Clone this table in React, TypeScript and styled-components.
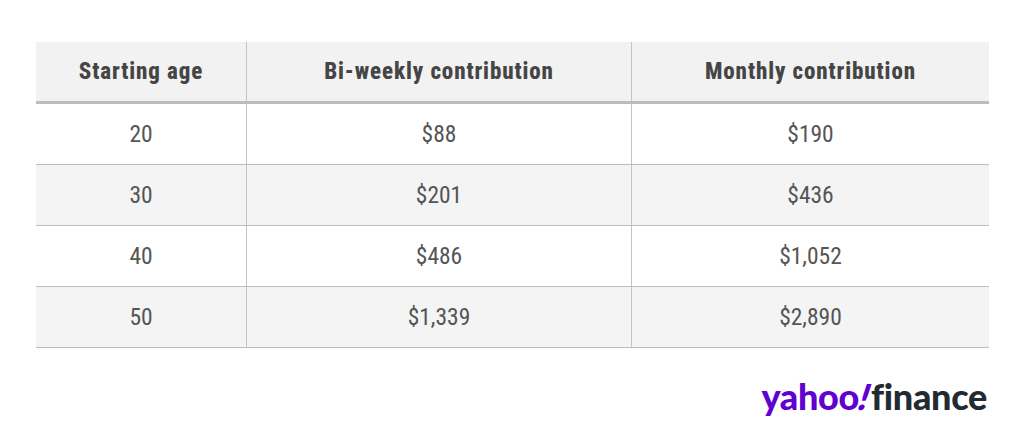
import React from "react";
import styled, { createGlobalStyle } from "styled-components";

const Global = createGlobalStyle`
  html, body { margin: 0; padding: 0; background: #fff; }
  body { width: 1024px; height: 423px; overflow: hidden; }
`;

const Page = styled.div`
  width: 1024px;
  height: 423px;
  box-sizing: border-box;
  padding: 42px 37px 0 36px;
  display: flex;
  flex-direction: column;
`;

const Table = styled.table`
  width: 951px;
  border-collapse: collapse;
  table-layout: fixed;
  font-family: "Roboto Condensed", "Roboto", sans-serif;
`;

const Th = styled.th<{ $w: number; $last?: boolean }>`
  width: ${(p) => p.$w}px;
  height: 59px;
  padding: 0;
  background: #f2f2f2;
  color: #454545;
  font-size: 23px;
  font-weight: 800;
  letter-spacing: 0.9px;
  text-align: center;
  border-bottom: 3px solid #bcbcbc;
  border-right: ${(p) => (p.$last ? "none" : "1px solid #c4c4c4")};
`;

const Tr = styled.tr<{ $alt: boolean }>`
  background: ${(p) => (p.$alt ? "#f4f4f4" : "#ffffff")};
`;

const Td = styled.td<{ $last?: boolean }>`
  height: 60px;
  padding: 0;
  color: #555;
  font-size: 23.5px;
  font-weight: 400;
  text-align: center;
  border-bottom: 1px solid #bdbdbd;
  border-right: ${(p) => (p.$last ? "none" : "1px solid #c4c4c4")};
`;

const Footer = styled.div`
  display: flex;
  justify-content: flex-end;
  padding-top: 30px;
`;

const Logo = styled.div`
  font-family: "Lato", "Roboto", sans-serif;
  font-weight: 900;
  font-size: 36px;
  line-height: 1;
  letter-spacing: -0.3px;
  display: flex;
  align-items: baseline;
`;

const Yahoo = styled.span`
  color: #6001d2;
`;

const Bang = styled.span`
  color: #6001d2;
  display: inline-block;
  transform: skewX(-18deg);
  margin: 0 1px;
`;

const Finance = styled.span`
  color: #232a31;
`;

const rows = [
  ["20", "$88", "$190"],
  ["30", "$201", "$436"],
  ["40", "$486", "$1,052"],
  ["50", "$1,339", "$2,890"],
];

export default function App() {
  return (
    <>
      <Global />
      <Page>
        <Table>
          <thead>
            <tr>
              <Th $w={210}>Starting age</Th>
              <Th $w={384}>Bi-weekly contribution</Th>
              <Th $w={357} $last>Monthly contribution</Th>
            </tr>
          </thead>
          <tbody>
            {rows.map((r, i) => (
              <Tr key={i} $alt={i % 2 === 1}>
                <Td>{r[0]}</Td>
                <Td>{r[1]}</Td>
                <Td $last>{r[2]}</Td>
              </Tr>
            ))}
          </tbody>
        </Table>
        <Footer>
          <Logo>
            <Yahoo>yahoo</Yahoo>
            <Bang>!</Bang>
            <Finance>finance</Finance>
          </Logo>
        </Footer>
      </Page>
    </>
  );
}
